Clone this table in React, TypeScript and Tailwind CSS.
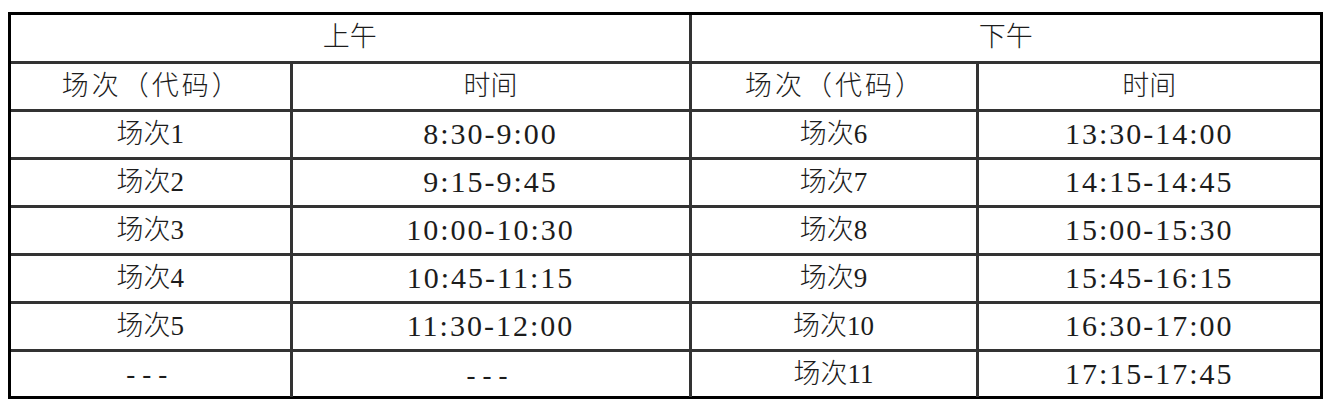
import React from 'react';

type Row = { a: string; aTime: string; p: string; pTime: string };

const rows: Row[] = [
  { a: '场次1', aTime: '8:30-9:00', p: '场次6', pTime: '13:30-14:00' },
  { a: '场次2', aTime: '9:15-9:45', p: '场次7', pTime: '14:15-14:45' },
  { a: '场次3', aTime: '10:00-10:30', p: '场次8', pTime: '15:00-15:30' },
  { a: '场次4', aTime: '10:45-11:15', p: '场次9', pTime: '15:45-16:15' },
  { a: '场次5', aTime: '11:30-12:00', p: '场次10', pTime: '16:30-17:00' },
  { a: '---', aTime: '---', p: '场次11', pTime: '17:15-17:45' },
];

const cell = 'border-[3px] border-[#333333] text-center align-middle p-0 leading-none';
const codeHead = `${cell} tracking-[3px] pl-[3px]`;
const timeCell = `${cell} text-[30px] tracking-[2px]`;
const dash = 'tracking-[7px] text-[27px]';

export default function App() {
  return (
    <div className="w-[1335px] h-[408px] bg-white pt-[12px] pl-[8px] font-['Liberation_Serif','Noto_Sans_CJK_SC',serif] font-light text-[#1c1c1c]">
      <div className="w-[1315px] h-[387px] border-[3px] border-black">
        <table className="w-full h-full table-fixed border-collapse border-hidden text-[27px]">
          <colgroup>
            <col className="w-[280px]" />
            <col className="w-[399px]" />
            <col className="w-[287px]" />
            <col />
          </colgroup>
          <tbody>
            <tr className="h-[47px]">
              <td colSpan={2} className={cell}>上午</td>
              <td colSpan={2} className={cell}>下午</td>
            </tr>
            <tr className="h-[48px]">
              <td className={codeHead}>场次（代码）</td>
              <td className={cell}>时间</td>
              <td className={codeHead}>场次（代码）</td>
              <td className={cell}>时间</td>
            </tr>
            {rows.map((r, i) => (
              <tr key={r.p} className={i === rows.length - 1 ? 'h-[47px]' : 'h-[48px]'}>
                <td className={cell}>
                  {r.a === '---' ? <span className={dash}>---</span> : r.a}
                </td>
                <td className={timeCell}>
                  {r.aTime === '---' ? <span className={dash}>---</span> : r.aTime}
                </td>
                <td className={cell}>{r.p}</td>
                <td className={timeCell}>{r.pTime}</td>
              </tr>
            ))}
          </tbody>
        </table>
      </div>
    </div>
  );
}
